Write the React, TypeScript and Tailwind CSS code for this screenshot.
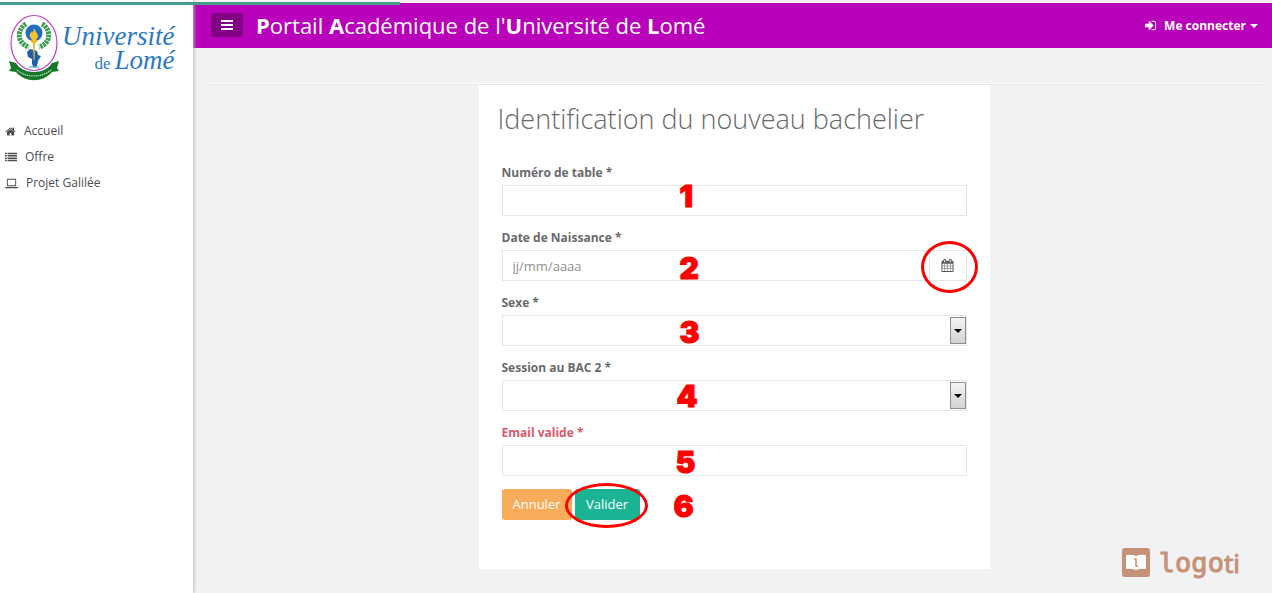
import type { ReactNode } from "react";

const ICONS = {
  home: "M1472 992v480q0 26-19 45t-45 19h-384v-384h-256v384h-384q-26 0-45-19t-19-45v-480q0-1 .5-3t.5-3l575-474 575 474q1 2 1 6zm223-69l-62 74q-8 9-21 11h-3q-13 0-21-7l-692-577-692 577q-12 8-24 7-13-2-21-11l-62-74q-8-10-7-23.5t11-21.5l719-599q32-26 76-26t76 26l244 204v-195q0-14 9-23t23-9h192q14 0 23 9t9 23v408l219 182q10 8 11 21.5t-7 23.5z",
  list: "M0 256h256v224H0zM384 256h1408v224H384zM0 608h256v224H0zM384 608h1408v224H384zM0 960h256v224H0zM384 960h1408v224H384zM0 1312h256v224H0zM384 1312h1408v224H384z",
  laptop: "M256 352q0-96 96-96h1088q96 0 96 96v832q0 96-96 96H352q-96 0-96-96zM384 384v768h1024V384zM0 1376h1792v64q0 96-96 96H96q-96 0-96-96z",
  signIn: "M1312 896q0 26-19 45l-544 544q-19 19-45 19t-45-19-19-45v-288h-448q-26 0-45-19t-19-45v-384q0-26 19-45t45-19h448v-288q0-26 19-45t45-19 45 19l544 544q19 19 19 45zm352-352v704q0 119-84.5 203.5t-203.5 84.5h-320q-13 0-22.5-9.5t-9.5-22.5q0-4-1-20t-.5-26.5 3-23.5 10-19.5 20.5-6.5h320q66 0 113-47t47-113v-704q0-66-47-113t-113-47h-312l-11.5-1-11.5-3-8-5.5-7-9-2-13.5q0-4-1-20t-.5-26.5 3-23.5 10-19.5 20.5-6.5h320q119 0 203.5 84.5t84.5 203.5z",
  calendar: "M192 1664h288v-288h-288v288zm352 0h320v-288h-320v288zm-352-352h288v-320h-288v320zm352 0h320v-320h-320v320zm-352-384h288v-288h-288v288zm736 736h320v-288h-320v288zm-384-736h320v-288h-320v288zm768 736h288v-288h-288v288zm-384-352h320v-320h-320v320zm-352-864v-288q0-13-9.5-22.5t-22.5-9.5h-64q-13 0-22.5 9.5t-9.5 22.5v288q0 13 9.5 22.5t22.5 9.5h64q13 0 22.5-9.5t9.5-22.5zm736 864h288v-320h-288v320zm-384-384h320v-288h-320v288zm384 0h288v-288h-288v288zm32-480v-288q0-13-9.5-22.5t-22.5-9.5h-64q-13 0-22.5 9.5t-9.5 22.5v288q0 13 9.5 22.5t22.5 9.5h64q13 0 22.5-9.5t9.5-22.5zm384-64v1280q0 52-38 90t-90 38h-1408q-52 0-90-38t-38-90v-1280q0-52 38-90t90-38h128v-96q0-66 47-113t113-47h64q66 0 113 47t47 113v96h384v-96q0-66 47-113t113-47h64q66 0 113 47t47 113v96h128q52 0 90 38t38 90z",
};

function Icon({ name, className }: { name: keyof typeof ICONS; className: string }) {
  return (
    <svg viewBox="0 0 1792 1792" fill="currentColor" fillRule="evenodd" className={className} aria-hidden="true">
      <path d={ICONS[name]} />
    </svg>
  );
}

function Crest() {
  return (
    <svg viewBox="0 0 52 68" className="w-[52px] h-[68px] shrink-0" aria-hidden="true">
      <ellipse cx="26" cy="29" rx="23" ry="27.500" fill="#fff" stroke="#c23fc4" strokeWidth="1.200" />
      <path d="M18 10C9 15 8 29 21 33" fill="none" stroke="#3d9c50" strokeWidth="5" strokeDasharray="2.500 .8" />
      <path d="M34 10C43 15 44 29 31 33" fill="none" stroke="#3d9c50" strokeWidth="5" strokeDasharray="2.500 .8" />
      <circle cx="26" cy="19" r="8.500" fill="#1d6fc4" />
      <path d="M19 38l3-3 4 1 3 1 1 4 3 1-3 5-1 5-3 2-2-4v-5l-4-2z" fill="#1b5fa8" />
      <path d="M26 14c1 3 4 5 4 9l-2 3h-4l-2-3c-1-3 1-4 2-6l1 2z" fill="#f5c32c" />
      <path d="M22 26h8l-2 3h-1l-.5 17h-1l-.5-17h-1z" fill="#e8b92c" />
      <path d="M21 53h10" stroke="#5aa9c9" strokeWidth="1.200" />
      <path d="M1 47l7 2c7 12 29 12 36 0l7-2-2 7 2 3-7 1c-9 11-27 11-36 0l-7-1 2-3z" fill="#17782c" />
      <path d="M9 56c9 8 25 8 34 0" fill="none" stroke="#b7dbb0" strokeWidth="1.200" strokeDasharray="1.500 .7" />
    </svg>
  );
}

function Mark({ n, className }: { n: number; className: string }) {
  return (
    <span
      className={`absolute pointer-events-none font-[Inter,sans-serif] font-black text-[30px] leading-[30px] text-[#fe0000] [-webkit-text-stroke:1px_#fe0000] ${className}`}
    >
      {n}
    </span>
  );
}

const CONTROL = "w-full h-[31px] px-[10px] bg-white border border-[#e5e6e7] text-[13px] outline-none placeholder:text-[#8f8f8f]";

function Field({ id, label, error, children }: { id: string; label: string; error?: boolean; children: ReactNode }) {
  return (
    <div className="mb-[13px]">
      <label
        htmlFor={id}
        className={`block mb-[3px] text-[12px] leading-[18px] font-bold ${error ? "text-[#d9596a]" : "text-[#676a6c]"}`}
      >
        {label}
      </label>
      <div className="relative flex">{children}</div>
    </div>
  );
}

function Select({ id }: { id: string }) {
  return (
    <>
      <select id={id} className={`${CONTROL} appearance-none`} />
      <span className="absolute right-px inset-y-[2px] w-4 flex items-center justify-center border border-[#8f8f8f] bg-linear-to-b from-[#f4f4f4] to-[#d2d2d2] pointer-events-none">
        <span className="border-x-4 border-t-4 border-x-transparent border-t-black" />
      </span>
    </>
  );
}

function Sidebar() {
  return (
    <aside className="w-[193px] shrink-0 bg-white shadow-[1px_0_3px_#b9b9be] z-10">
      <a href="#" className="flex pt-[14px] pl-2 font-['Liberation_Serif',serif] italic text-[#2a79c4]">
        <Crest />
        <span className="flex flex-col items-end pt-[10px] pl-[2px]">
          <span className="text-[27px] leading-[24px]">Université</span>
          <span className="flex items-baseline gap-1 text-[27px] leading-[24px]">
            <span className="text-[17px] not-italic">de</span>Lomé
          </span>
        </span>
      </a>
      <nav className="flex flex-col pt-9 pl-[5px] text-[12px] leading-[26px] text-[#4a4c50]">
        <a href="#" className="flex items-center gap-2">
          <Icon name="home" className="w-[11px] h-[13px]" />
          Accueil
        </a>
        <a href="#" className="flex items-center gap-2">
          <Icon name="list" className="w-3 h-3" />
          Offre
        </a>
        <a href="#" className="flex items-center gap-2">
          <Icon name="laptop" className="w-[13px] h-[13px]" />
          Projet Galilée
        </a>
      </nav>
    </aside>
  );
}

function Header() {
  return (
    <header className="flex items-center h-[45px] mt-[3px] pl-[18px] pr-[14px] bg-[#b900bb] text-white">
      <button aria-label="Menu" className="flex flex-col items-center justify-center gap-[2px] w-8 h-6 mb-px rounded-[3px] bg-[#830085]">
        <span className="w-3 h-[2px] bg-white" />
        <span className="w-3 h-[2px] bg-white" />
        <span className="w-3 h-[2px] bg-white" />
      </button>
      <h1 className="ml-[13px] text-[22px] font-medium whitespace-nowrap">
        <b>P</b>ortail <b>A</b>cadémique de l'<b>U</b>niversité de <b>L</b>omé
      </h1>
      <a href="#" className="ml-auto flex items-center text-[12px] font-bold whitespace-nowrap">
        <Icon name="signIn" className="w-[13px] h-[13px] mr-[7px]" />
        Me connecter
        <span className="ml-1 border-x-4 border-t-4 border-x-transparent border-t-white" />
      </a>
    </header>
  );
}

function IdentificationForm() {
  return (
    <form className="w-full max-w-[511px] mx-auto pt-4 pb-[49px] px-[23px] bg-white">
      <h2 className="-ml-1 mb-[27px] text-[27px] leading-9 font-light text-[#676a6c] whitespace-nowrap">
        Identification du nouveau bachelier
      </h2>
      <Field id="table" label="Numéro de table *">
        <input id="table" type="text" className={CONTROL} />
        <Mark n={1} className="left-[178px] -top-1" />
      </Field>
      <Field id="naissance" label="Date de Naissance *">
        <input id="naissance" type="text" placeholder="jj/mm/aaaa" className={CONTROL} />
        <button type="button" aria-label="Calendrier" className="w-[38px] shrink-0 -ml-px flex items-center justify-center border border-[#e5e6e7] bg-white text-[#55585a]">
          <Icon name="calendar" className="w-[13px] h-[13px]" />
        </button>
        <Mark n={2} className="left-[178px] top-[3px]" />
        <span className="absolute -right-[11px] -top-[9px] w-[57px] h-[52px] rounded-[50%] border-3 border-[#fe0000] pointer-events-none" />
      </Field>
      <Field id="sexe" label="Sexe *">
        <Select id="sexe" />
        <Mark n={3} className="left-[178px] top-[2px]" />
      </Field>
      <Field id="session" label="Session au BAC 2 *">
        <Select id="session" />
        <Mark n={4} className="left-[175px] top-[1px]" />
      </Field>
      <Field id="email" label="Email valide *" error>
        <input id="email" type="email" className={CONTROL} />
        <Mark n={5} className="left-[174px] top-[2px]" />
      </Field>
      <div className="relative flex gap-[3px] text-[13px] text-white">
        <button type="button" className="w-[70px] h-[31px] rounded-[3px] bg-[#f8ac59]">Annuler</button>
        <button type="submit" className="w-[65px] h-[31px] rounded-[3px] bg-[#1ab394]">Valider</button>
        <span className="absolute left-[63px] -top-[6px] w-[83px] h-[45px] rounded-[50%] border-3 border-[#fe0000] pointer-events-none" />
        <Mark n={6} className="left-[172px] top-[2px]" />
      </div>
    </form>
  );
}

function Watermark() {
  return (
    <div className="absolute right-8 bottom-4 flex items-center gap-[9px] text-[#c69276]">
      <svg viewBox="0 0 28 29" className="w-7 h-[29px]" aria-hidden="true">
        <rect width="28" height="29" rx="3" fill="currentColor" />
        <path d="M4 7q6-1 10 1 4-2 10-1v14q-6-1-10 1-4-2-10-1z" fill="#fff" />
        <path d="M12 11h2v7h2" fill="none" stroke="currentColor" strokeWidth="1.500" />
      </svg>
      <span className="flex pt-[2px] font-['DejaVu_Sans_Mono',monospace] text-[27px] leading-7 [-webkit-text-stroke:1px_#c69276]">
        logo<span className="font-['Noto_Sans',sans-serif] text-[26px]">ti</span>
      </span>
    </div>
  );
}

export default function App() {
  return (
    <div className="relative flex min-h-screen bg-[#f2f2f4] font-['Open_Sans',sans-serif]">
      <div className="absolute left-0 top-[2px] z-20 w-[400px] h-[3px] bg-[#459c88]" />
      <Sidebar />
      <main className="flex-1 min-w-0">
        <Header />
        <div className="pt-[35px] pl-[13px] pr-[10px]">
          <div className="h-[2px] bg-white border-b border-[#e7eaec]" />
          <IdentificationForm />
        </div>
      </main>
      <Watermark />
    </div>
  );
}
